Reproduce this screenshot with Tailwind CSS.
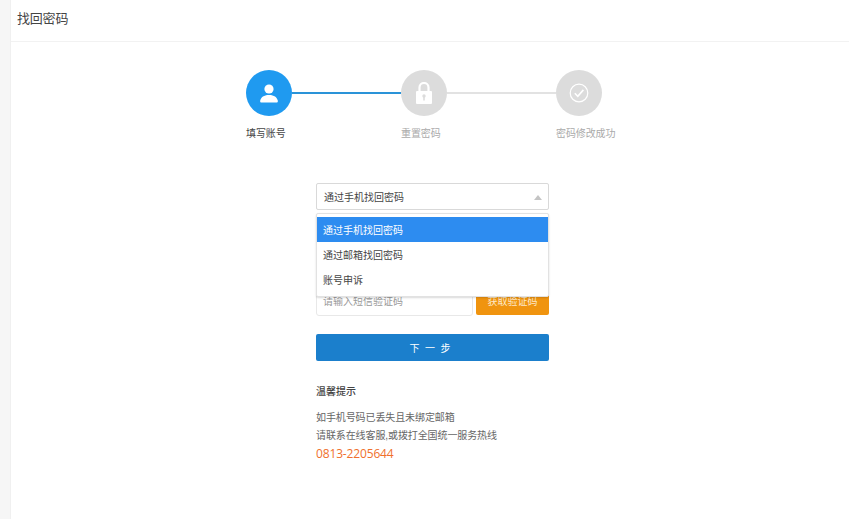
<!DOCTYPE html>
<html lang="zh-CN">
<head>
    <meta charset="UTF-8">
    <meta name="viewport" content="width=device-width, initial-scale=1.0">
    <title>找回密码</title>
    <script src="https://cdn.jsdelivr.net/npm/@tailwindcss/browser@4"></script>
</head>
<body class="bg-white overflow-hidden font-['Liberation_Sans','Noto_Sans_CJK_SC',sans-serif]">
    <div class="flex h-[519px] w-[849px]">
        <div class="w-[10px] bg-[#f6f6f6] shrink-0"></div>
        <div class="flex-1 border-l border-[#f0f0f0]">
            <div class="h-[42px] border-b border-[#f2f2f2] pl-[6px] pt-[10px] text-[13px] leading-[18px] text-[#444] tracking-[-0.2px]">找回密码</div>

            <!-- steps -->
            <div class="ml-[235px] mt-[28px] w-[356px]">
                <div class="flex items-center">
                    <div class="w-[46px] h-[46px] rounded-full bg-[#1f9af0] flex items-center justify-center shrink-0">
                        <svg width="18" height="19" viewBox="0 0 18 19" fill="#fff" class="-ml-[1px]">
                            <circle cx="9" cy="5" r="4.600"/>
                            <path d="M1.500 18.500c-1.200 0-1.600-1-1.200-2.200C1.200 13.400 3.600 11 9 11s7.800 2.400 8.700 5.300c.4 1.200 0 2.200-1.200 2.200z"/>
                        </svg>
                    </div>
                    <div class="flex-1 h-[2px] bg-[#2a93d8]"></div>
                    <div class="w-[46px] h-[46px] rounded-full bg-[#dcdcdc] flex items-center justify-center shrink-0">
                        <svg width="16" height="22" viewBox="0 0 16 22" class="-ml-[1px]">
                            <path d="M3.500 10V5.500a4.500 4.500 0 0 1 9 0V10" fill="none" stroke="#fff" stroke-width="2.200"/>
                            <rect x="0" y="9" width="16" height="13" rx="1" fill="#fff"/>
                            <circle cx="8" cy="14" r="1.700" fill="#dcdcdc"/>
                            <rect x="7.200" y="14" width="1.600" height="4.500" fill="#dcdcdc"/>
                        </svg>
                    </div>
                    <div class="flex-1 h-[2px] bg-[#e2e2e2]"></div>
                    <div class="w-[46px] h-[46px] rounded-full bg-[#dcdcdc] flex items-center justify-center shrink-0">
                        <svg width="20" height="20" viewBox="0 0 20 20" fill="none" stroke="#fff" class="-ml-[1px]">
                            <circle cx="10" cy="10" r="8.800" stroke-width="1.200"/>
                            <path d="M5.800 10.300l3 3 5.600-6.400" stroke-width="1.600"/>
                        </svg>
                    </div>
                </div>
                <div class="flex mt-[11px] text-[10px] leading-[14px] tracking-[-0.1px]">
                    <div class="w-[155px] shrink-0 text-[#444]">填写账号</div>
                    <div class="w-[155px] shrink-0 text-[#aaa]">重置密码</div>
                    <div class="shrink-0 text-[#aaa] whitespace-nowrap">密码修改成功</div>
                </div>
            </div>

            <!-- form -->
            <div class="ml-[305px] mt-[42px] w-[233px] relative">
                <div class="h-[27px] border border-[#d9d9d9] rounded-[2px] pl-[7px] pr-[6px] pt-[1px] flex items-center justify-between text-[10px] text-[#444]">
                    <span>通过手机找回密码</span>
                    <span class="w-0 h-0 border-x-[4px] border-x-transparent border-b-[5px] border-b-[#c4c4c4]"></span>
                </div>

                <div class="h-[27px] mt-[27px] border border-[#e5e5e5] rounded-[2px]"></div>

                <div class="flex gap-[3px] mt-[25px]">
                    <div class="w-[157px] h-[27px] border border-[#e8e8e8] rounded-[3px] pl-[6px] pb-[2px] flex items-center text-[10px] text-[#999]">请输入短信验证码</div>
                    <div class="flex-1 h-[26px] bg-[#f0940f] rounded-[2px] pb-[2px] flex items-center justify-center text-[10px] text-[#fde8c8]">获取验证码</div>
                </div>

                <div class="h-[27px] mt-[18px] pr-[5px] pt-[1px] bg-[#1b7fcc] rounded-[2px] flex items-center justify-center text-[10px] text-white whitespace-pre">下  一  步</div>

                <div class="mt-[24px] text-[10px] leading-[14px] font-medium text-[#444]">温馨提示</div>
                <div class="mt-[10px] text-[10px] leading-[18px] text-[#666] tracking-[-0.1px]">
                    <p>如手机号码已丢失且未绑定邮箱</p>
                    <p>请联系在线客服,或拨打全国统一服务热线</p>
                </div>
                <div class="text-[12px] leading-[18px] -mt-[0px] text-[#f0702c] font-['Open_Sans',sans-serif] tracking-[-0.15px]">0813-2205644</div>

                <!-- dropdown menu over the fields -->
                <div class="absolute left-0 top-[30px] w-[233px] h-[84px] bg-white border border-[#e2e2e2] rounded-[2px] pt-[3px] shadow-[0_1px_2px_rgba(0,0,0,0.15)] text-[10px] text-[#444]">
                    <div class="h-[25px] bg-[#2d8cf0] text-white pl-[6px] pt-[1px] flex items-center">通过手机找回密码</div>
                    <div class="h-[25px] pl-[6px] pt-[1px] flex items-center">通过邮箱找回密码</div>
                    <div class="h-[25px] pl-[6px] pt-[1px] flex items-center">账号申诉</div>
                </div>
            </div>
        </div>
    </div>
</body>
</html>
